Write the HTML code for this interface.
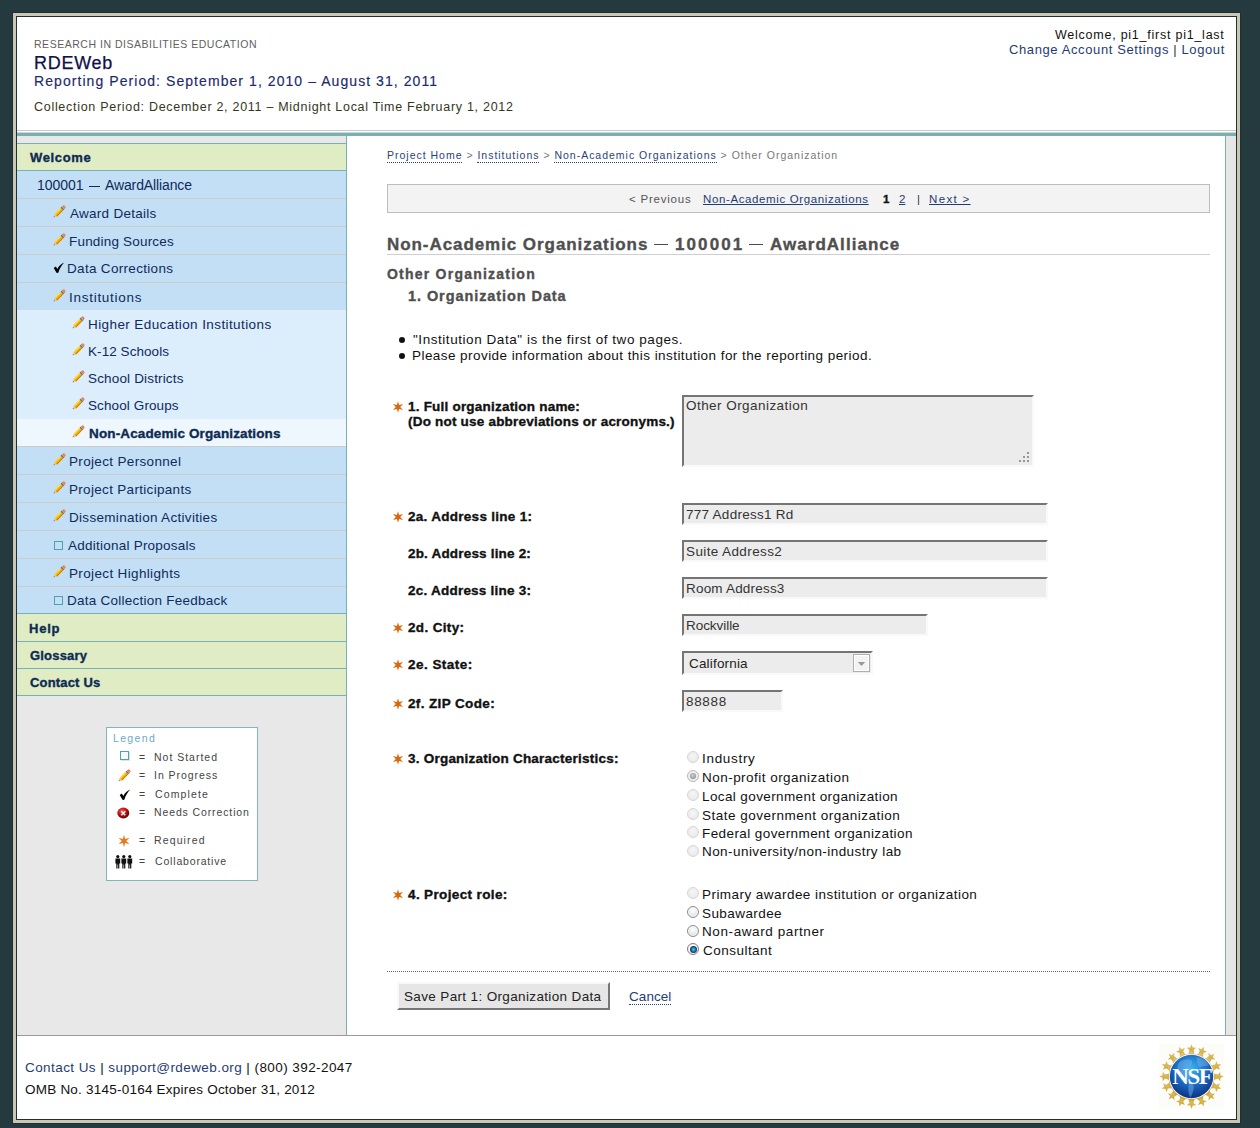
<!DOCTYPE html>
<html><head><meta charset="utf-8"><title>RDEWeb</title><style>
html,body{margin:0;padding:0;width:1260px;height:1128px;overflow:hidden;background:#253a3e}
body>div,body>svg{position:absolute}
div div{position:absolute}
.t{white-space:nowrap;line-height:normal;font-family:"Liberation Sans",sans-serif}
.b{-webkit-text-stroke:0.35px}
.dl{border-bottom:1px dotted #2b3f78}
.bc .dl{padding-bottom:1px}
u{text-decoration:underline}
</style></head><body>
<div style="left:12px;top:12px;width:1229px;height:1112px;background:#1e3036"></div>
<div style="left:13px;top:13px;width:1227px;height:1110px;background:#c9c6b1"></div>
<div style="left:16px;top:16px;width:1221px;height:1104px;background:#1e3036"></div>
<div style="left:17px;top:17px;width:1219px;height:1102px;background:#fff"></div>
<div style="left:17px;top:130px;width:1219px;height:1px;background:#c9c9c9"></div>
<div style="left:17px;top:132px;width:1219px;height:1px;background:#d9d0cf"></div>
<div style="left:17px;top:133px;width:1219px;height:3px;background:#76b2b4"></div>
<div style="left:17px;top:136px;width:329px;height:899px;background:#e8e8e8"></div>
<div style="left:346px;top:136px;width:1px;height:899px;background:#76b2b4"></div>
<div style="left:17px;top:143px;width:329px;height:1px;background:#76b2b4"></div>
<div style="left:17px;top:144px;width:329px;height:26px;background:#dfecc4"></div>
<div style="left:17px;top:170px;width:329px;height:1px;background:#76b2b4"></div>
<div style="left:17px;top:171px;width:329px;height:139px;background:#c3dff5"></div>
<div style="left:17px;top:198px;width:329px;height:1px;background:#cfcbc6"></div>
<div style="left:17px;top:226px;width:329px;height:1px;background:#cfcbc6"></div>
<div style="left:17px;top:254px;width:329px;height:1px;background:#cfcbc6"></div>
<div style="left:17px;top:282px;width:329px;height:1px;background:#cfcbc6"></div>
<div style="left:17px;top:310px;width:329px;height:109px;background:#dcedfc"></div>
<div style="left:17px;top:419px;width:329px;height:27px;background:#edf7fd"></div>
<div style="left:17px;top:446px;width:329px;height:1px;background:#cfcbc6"></div>
<div style="left:17px;top:447px;width:329px;height:166px;background:#c3dff5"></div>
<div style="left:17px;top:474px;width:329px;height:1px;background:#cfcbc6"></div>
<div style="left:17px;top:502px;width:329px;height:1px;background:#cfcbc6"></div>
<div style="left:17px;top:530px;width:329px;height:1px;background:#cfcbc6"></div>
<div style="left:17px;top:558px;width:329px;height:1px;background:#cfcbc6"></div>
<div style="left:17px;top:586px;width:329px;height:1px;background:#cfcbc6"></div>
<div style="left:17px;top:613px;width:329px;height:1px;background:#76b2b4"></div>
<div style="left:17px;top:614px;width:329px;height:27px;background:#dfecc4"></div>
<div style="left:17px;top:641px;width:329px;height:1px;background:#76b2b4"></div>
<div style="left:17px;top:642px;width:329px;height:26px;background:#dfecc4"></div>
<div style="left:17px;top:668px;width:329px;height:1px;background:#76b2b4"></div>
<div style="left:17px;top:669px;width:329px;height:26px;background:#dfecc4"></div>
<div style="left:17px;top:695px;width:329px;height:1px;background:#76b2b4"></div>
<div style="left:1225px;top:136px;width:1px;height:899px;background:#76b2b4"></div>
<div style="left:1226px;top:136px;width:10px;height:899px;background:#e6e6e6"></div>
<div style="left:17px;top:1035px;width:1219px;height:1px;background:#9a9a9a"></div>
<svg style="left:52px;top:204px" width="15" height="15" viewBox="0 0 15 15"><g transform="translate(1.7,13.3) rotate(-45)">
<path d="M0,0 L3,-1.8 L3,1.8 Z" fill="#e8c0a0"/><path d="M0,0 L1.2,-0.75 L1.2,0.75 Z" fill="#6f655d"/>
<rect x="3" y="-1.8" width="8.6" height="3.6" fill="#f6b300"/><rect x="3" y="-1.8" width="8.6" height="1.1" fill="#ffdc55"/><rect x="3" y="0.8" width="8.6" height="1.0" fill="#cf7a00"/>
<rect x="11.6" y="-1.8" width="1.4" height="3.6" fill="#3b7b92"/><path d="M13,-1.8 h1.2 a1.8,1.8 0 0 1 0,3.6 h-1.2 Z" fill="#ee8252"/></g></svg>
<svg style="left:52px;top:232px" width="15" height="15" viewBox="0 0 15 15"><g transform="translate(1.7,13.3) rotate(-45)">
<path d="M0,0 L3,-1.8 L3,1.8 Z" fill="#e8c0a0"/><path d="M0,0 L1.2,-0.75 L1.2,0.75 Z" fill="#6f655d"/>
<rect x="3" y="-1.8" width="8.6" height="3.6" fill="#f6b300"/><rect x="3" y="-1.8" width="8.6" height="1.1" fill="#ffdc55"/><rect x="3" y="0.8" width="8.6" height="1.0" fill="#cf7a00"/>
<rect x="11.6" y="-1.8" width="1.4" height="3.6" fill="#3b7b92"/><path d="M13,-1.8 h1.2 a1.8,1.8 0 0 1 0,3.6 h-1.2 Z" fill="#ee8252"/></g></svg>
<svg style="left:52px;top:288px" width="15" height="15" viewBox="0 0 15 15"><g transform="translate(1.7,13.3) rotate(-45)">
<path d="M0,0 L3,-1.8 L3,1.8 Z" fill="#e8c0a0"/><path d="M0,0 L1.2,-0.75 L1.2,0.75 Z" fill="#6f655d"/>
<rect x="3" y="-1.8" width="8.6" height="3.6" fill="#f6b300"/><rect x="3" y="-1.8" width="8.6" height="1.1" fill="#ffdc55"/><rect x="3" y="0.8" width="8.6" height="1.0" fill="#cf7a00"/>
<rect x="11.6" y="-1.8" width="1.4" height="3.6" fill="#3b7b92"/><path d="M13,-1.8 h1.2 a1.8,1.8 0 0 1 0,3.6 h-1.2 Z" fill="#ee8252"/></g></svg>
<svg style="left:71px;top:315px" width="15" height="15" viewBox="0 0 15 15"><g transform="translate(1.7,13.3) rotate(-45)">
<path d="M0,0 L3,-1.8 L3,1.8 Z" fill="#e8c0a0"/><path d="M0,0 L1.2,-0.75 L1.2,0.75 Z" fill="#6f655d"/>
<rect x="3" y="-1.8" width="8.6" height="3.6" fill="#f6b300"/><rect x="3" y="-1.8" width="8.6" height="1.1" fill="#ffdc55"/><rect x="3" y="0.8" width="8.6" height="1.0" fill="#cf7a00"/>
<rect x="11.6" y="-1.8" width="1.4" height="3.6" fill="#3b7b92"/><path d="M13,-1.8 h1.2 a1.8,1.8 0 0 1 0,3.6 h-1.2 Z" fill="#ee8252"/></g></svg>
<svg style="left:71px;top:342px" width="15" height="15" viewBox="0 0 15 15"><g transform="translate(1.7,13.3) rotate(-45)">
<path d="M0,0 L3,-1.8 L3,1.8 Z" fill="#e8c0a0"/><path d="M0,0 L1.2,-0.75 L1.2,0.75 Z" fill="#6f655d"/>
<rect x="3" y="-1.8" width="8.6" height="3.6" fill="#f6b300"/><rect x="3" y="-1.8" width="8.6" height="1.1" fill="#ffdc55"/><rect x="3" y="0.8" width="8.6" height="1.0" fill="#cf7a00"/>
<rect x="11.6" y="-1.8" width="1.4" height="3.6" fill="#3b7b92"/><path d="M13,-1.8 h1.2 a1.8,1.8 0 0 1 0,3.6 h-1.2 Z" fill="#ee8252"/></g></svg>
<svg style="left:71px;top:369px" width="15" height="15" viewBox="0 0 15 15"><g transform="translate(1.7,13.3) rotate(-45)">
<path d="M0,0 L3,-1.8 L3,1.8 Z" fill="#e8c0a0"/><path d="M0,0 L1.2,-0.75 L1.2,0.75 Z" fill="#6f655d"/>
<rect x="3" y="-1.8" width="8.6" height="3.6" fill="#f6b300"/><rect x="3" y="-1.8" width="8.6" height="1.1" fill="#ffdc55"/><rect x="3" y="0.8" width="8.6" height="1.0" fill="#cf7a00"/>
<rect x="11.6" y="-1.8" width="1.4" height="3.6" fill="#3b7b92"/><path d="M13,-1.8 h1.2 a1.8,1.8 0 0 1 0,3.6 h-1.2 Z" fill="#ee8252"/></g></svg>
<svg style="left:71px;top:396px" width="15" height="15" viewBox="0 0 15 15"><g transform="translate(1.7,13.3) rotate(-45)">
<path d="M0,0 L3,-1.8 L3,1.8 Z" fill="#e8c0a0"/><path d="M0,0 L1.2,-0.75 L1.2,0.75 Z" fill="#6f655d"/>
<rect x="3" y="-1.8" width="8.6" height="3.6" fill="#f6b300"/><rect x="3" y="-1.8" width="8.6" height="1.1" fill="#ffdc55"/><rect x="3" y="0.8" width="8.6" height="1.0" fill="#cf7a00"/>
<rect x="11.6" y="-1.8" width="1.4" height="3.6" fill="#3b7b92"/><path d="M13,-1.8 h1.2 a1.8,1.8 0 0 1 0,3.6 h-1.2 Z" fill="#ee8252"/></g></svg>
<svg style="left:71px;top:424px" width="15" height="15" viewBox="0 0 15 15"><g transform="translate(1.7,13.3) rotate(-45)">
<path d="M0,0 L3,-1.8 L3,1.8 Z" fill="#e8c0a0"/><path d="M0,0 L1.2,-0.75 L1.2,0.75 Z" fill="#6f655d"/>
<rect x="3" y="-1.8" width="8.6" height="3.6" fill="#f6b300"/><rect x="3" y="-1.8" width="8.6" height="1.1" fill="#ffdc55"/><rect x="3" y="0.8" width="8.6" height="1.0" fill="#cf7a00"/>
<rect x="11.6" y="-1.8" width="1.4" height="3.6" fill="#3b7b92"/><path d="M13,-1.8 h1.2 a1.8,1.8 0 0 1 0,3.6 h-1.2 Z" fill="#ee8252"/></g></svg>
<svg style="left:52px;top:452px" width="15" height="15" viewBox="0 0 15 15"><g transform="translate(1.7,13.3) rotate(-45)">
<path d="M0,0 L3,-1.8 L3,1.8 Z" fill="#e8c0a0"/><path d="M0,0 L1.2,-0.75 L1.2,0.75 Z" fill="#6f655d"/>
<rect x="3" y="-1.8" width="8.6" height="3.6" fill="#f6b300"/><rect x="3" y="-1.8" width="8.6" height="1.1" fill="#ffdc55"/><rect x="3" y="0.8" width="8.6" height="1.0" fill="#cf7a00"/>
<rect x="11.6" y="-1.8" width="1.4" height="3.6" fill="#3b7b92"/><path d="M13,-1.8 h1.2 a1.8,1.8 0 0 1 0,3.6 h-1.2 Z" fill="#ee8252"/></g></svg>
<svg style="left:52px;top:480px" width="15" height="15" viewBox="0 0 15 15"><g transform="translate(1.7,13.3) rotate(-45)">
<path d="M0,0 L3,-1.8 L3,1.8 Z" fill="#e8c0a0"/><path d="M0,0 L1.2,-0.75 L1.2,0.75 Z" fill="#6f655d"/>
<rect x="3" y="-1.8" width="8.6" height="3.6" fill="#f6b300"/><rect x="3" y="-1.8" width="8.6" height="1.1" fill="#ffdc55"/><rect x="3" y="0.8" width="8.6" height="1.0" fill="#cf7a00"/>
<rect x="11.6" y="-1.8" width="1.4" height="3.6" fill="#3b7b92"/><path d="M13,-1.8 h1.2 a1.8,1.8 0 0 1 0,3.6 h-1.2 Z" fill="#ee8252"/></g></svg>
<svg style="left:52px;top:508px" width="15" height="15" viewBox="0 0 15 15"><g transform="translate(1.7,13.3) rotate(-45)">
<path d="M0,0 L3,-1.8 L3,1.8 Z" fill="#e8c0a0"/><path d="M0,0 L1.2,-0.75 L1.2,0.75 Z" fill="#6f655d"/>
<rect x="3" y="-1.8" width="8.6" height="3.6" fill="#f6b300"/><rect x="3" y="-1.8" width="8.6" height="1.1" fill="#ffdc55"/><rect x="3" y="0.8" width="8.6" height="1.0" fill="#cf7a00"/>
<rect x="11.6" y="-1.8" width="1.4" height="3.6" fill="#3b7b92"/><path d="M13,-1.8 h1.2 a1.8,1.8 0 0 1 0,3.6 h-1.2 Z" fill="#ee8252"/></g></svg>
<svg style="left:52px;top:564px" width="15" height="15" viewBox="0 0 15 15"><g transform="translate(1.7,13.3) rotate(-45)">
<path d="M0,0 L3,-1.8 L3,1.8 Z" fill="#e8c0a0"/><path d="M0,0 L1.2,-0.75 L1.2,0.75 Z" fill="#6f655d"/>
<rect x="3" y="-1.8" width="8.6" height="3.6" fill="#f6b300"/><rect x="3" y="-1.8" width="8.6" height="1.1" fill="#ffdc55"/><rect x="3" y="0.8" width="8.6" height="1.0" fill="#cf7a00"/>
<rect x="11.6" y="-1.8" width="1.4" height="3.6" fill="#3b7b92"/><path d="M13,-1.8 h1.2 a1.8,1.8 0 0 1 0,3.6 h-1.2 Z" fill="#ee8252"/></g></svg>
<svg style="left:53px;top:262px" width="12" height="12" viewBox="0 0 12 12"><path d="M0.7,6.0 L2.9,4.5 L4.3,6.9 C5.7,4.3 7.9,1.7 11.3,0.5 C8.7,3.1 6.7,6.2 5.3,10.7 L3.7,10.9 Z" fill="#000"/></svg>
<div style="left:54px;top:541px;width:7px;height:7px;border:1px solid #52a0ac;background:transparent;box-shadow:none"></div>
<div style="left:54px;top:596px;width:7px;height:7px;border:1px solid #52a0ac;background:transparent;box-shadow:none"></div>
<div style="left:106px;top:727px;width:150px;height:152px;background:#fff;border:1px solid #7fb7bb"></div>
<div style="left:120px;top:751px;width:7px;height:7px;border:1px solid #52a0ac;background:#f4fafa;box-shadow:1px 1px 0 #dde4e4"></div>
<svg style="left:117px;top:768px" width="15" height="15" viewBox="0 0 15 15"><g transform="translate(1.7,13.3) rotate(-45)">
<path d="M0,0 L3,-1.8 L3,1.8 Z" fill="#e8c0a0"/><path d="M0,0 L1.2,-0.75 L1.2,0.75 Z" fill="#6f655d"/>
<rect x="3" y="-1.8" width="8.6" height="3.6" fill="#f6b300"/><rect x="3" y="-1.8" width="8.6" height="1.1" fill="#ffdc55"/><rect x="3" y="0.8" width="8.6" height="1.0" fill="#cf7a00"/>
<rect x="11.6" y="-1.8" width="1.4" height="3.6" fill="#3b7b92"/><path d="M13,-1.8 h1.2 a1.8,1.8 0 0 1 0,3.6 h-1.2 Z" fill="#ee8252"/></g></svg>
<svg style="left:119px;top:789px" width="12" height="12" viewBox="0 0 12 12"><path d="M0.7,6.0 L2.9,4.5 L4.3,6.9 C5.7,4.3 7.9,1.7 11.3,0.5 C8.7,3.1 6.7,6.2 5.3,10.7 L3.7,10.9 Z" fill="#000"/></svg>
<svg style="left:117px;top:807px" width="13" height="13" viewBox="0 0 13 13"><defs><radialGradient id="rg" cx="0.4" cy="0.35" r="0.7"><stop offset="0" stop-color="#f06060"/><stop offset="0.55" stop-color="#b80c0c"/><stop offset="1" stop-color="#5a0000"/></radialGradient></defs><ellipse cx="6.3" cy="6.0" rx="6" ry="5.4" fill="url(#rg)"/><path d="M4.3,4.2 L8.3,8.2 M8.3,4.2 L4.3,8.2" stroke="#fff" stroke-width="1.4"/></svg>
<svg style="left:117.5px;top:834.5px" width="12" height="12" viewBox="0 0 12 12"><polygon points="6.00,-0.30 4.87,4.04 0.54,2.85 3.73,6.00 0.54,9.15 4.87,7.96 6.00,12.30 7.13,7.96 11.46,9.15 8.27,6.00 11.46,2.85 7.13,4.04" fill="#e67a20"/></svg>
<svg style="left:115px;top:855px" width="18" height="14" viewBox="0 0 18 14"><g transform="translate(2.8,0)"><circle cx="0" cy="1.6" r="1.6" fill="#111"/><path d="M-2.4,3.6 h4.8 v5 h-0.9 v5 h-1.2 v-4 h-0.6 v4 h-1.2 v-5 h-0.9 Z" fill="#111"/></g><g transform="translate(8.8,0)"><circle cx="0" cy="1.6" r="1.6" fill="#111"/><path d="M-2.4,3.6 h4.8 v5 h-0.9 v5 h-1.2 v-4 h-0.6 v4 h-1.2 v-5 h-0.9 Z" fill="#111"/></g><g transform="translate(14.8,0)"><circle cx="0" cy="1.6" r="1.6" fill="#111"/><path d="M-2.4,3.6 h4.8 v5 h-0.9 v5 h-1.2 v-4 h-0.6 v4 h-1.2 v-5 h-0.9 Z" fill="#111"/></g></svg>
<div style="left:89px;top:186px;width:11px;height:1px;background:#0f2a5c"></div>
<div style="left:654px;top:244px;width:14px;height:1px;background:#4a4a4a"></div>
<div style="left:749px;top:244px;width:14px;height:1px;background:#4a4a4a"></div>
<div style="left:387px;top:184px;width:821px;height:27px;background:#f3f3f3;border:1px solid #bdbdbd"></div>
<div style="left:387px;top:254px;width:823px;height:1px;background:#cfcfcf"></div>
<div style="left:399px;top:337px;width:6px;height:6px;border-radius:50%;background:#111"></div>
<div style="left:399px;top:353px;width:6px;height:6px;border-radius:50%;background:#111"></div>
<svg style="left:391.5px;top:400.5px" width="12" height="12" viewBox="0 0 12 12"><polygon points="6.00,0.20 4.90,4.09 0.98,3.10 3.80,6.00 0.98,8.90 4.90,7.91 6.00,11.80 7.10,7.91 11.02,8.90 8.20,6.00 11.02,3.10 7.10,4.09" fill="#d9690f"/></svg>
<svg style="left:391.5px;top:510.5px" width="12" height="12" viewBox="0 0 12 12"><polygon points="6.00,0.20 4.90,4.09 0.98,3.10 3.80,6.00 0.98,8.90 4.90,7.91 6.00,11.80 7.10,7.91 11.02,8.90 8.20,6.00 11.02,3.10 7.10,4.09" fill="#d9690f"/></svg>
<svg style="left:391.5px;top:621.5px" width="12" height="12" viewBox="0 0 12 12"><polygon points="6.00,0.20 4.90,4.09 0.98,3.10 3.80,6.00 0.98,8.90 4.90,7.91 6.00,11.80 7.10,7.91 11.02,8.90 8.20,6.00 11.02,3.10 7.10,4.09" fill="#d9690f"/></svg>
<svg style="left:391.5px;top:658.5px" width="12" height="12" viewBox="0 0 12 12"><polygon points="6.00,0.20 4.90,4.09 0.98,3.10 3.80,6.00 0.98,8.90 4.90,7.91 6.00,11.80 7.10,7.91 11.02,8.90 8.20,6.00 11.02,3.10 7.10,4.09" fill="#d9690f"/></svg>
<svg style="left:391.5px;top:697.5px" width="12" height="12" viewBox="0 0 12 12"><polygon points="6.00,0.20 4.90,4.09 0.98,3.10 3.80,6.00 0.98,8.90 4.90,7.91 6.00,11.80 7.10,7.91 11.02,8.90 8.20,6.00 11.02,3.10 7.10,4.09" fill="#d9690f"/></svg>
<svg style="left:391.5px;top:752.5px" width="12" height="12" viewBox="0 0 12 12"><polygon points="6.00,0.20 4.90,4.09 0.98,3.10 3.80,6.00 0.98,8.90 4.90,7.91 6.00,11.80 7.10,7.91 11.02,8.90 8.20,6.00 11.02,3.10 7.10,4.09" fill="#d9690f"/></svg>
<svg style="left:391.5px;top:888.5px" width="12" height="12" viewBox="0 0 12 12"><polygon points="6.00,0.20 4.90,4.09 0.98,3.10 3.80,6.00 0.98,8.90 4.90,7.91 6.00,11.80 7.10,7.91 11.02,8.90 8.20,6.00 11.02,3.10 7.10,4.09" fill="#d9690f"/></svg>
<div style="left:682px;top:395px;width:348px;height:68px;background:#ececec;border-top:2px solid #757575;border-left:2px solid #757575;border-right:2px solid #f9f9f9;border-bottom:2px solid #f9f9f9"></div>
<svg style="left:1017px;top:450px" width="12" height="12" viewBox="0 0 12 12" fill="#979797"><rect x="10" y="2" width="2" height="2"/><rect x="6" y="6" width="2" height="2"/><rect x="10" y="6" width="2" height="2"/><rect x="2" y="10" width="2" height="2"/><rect x="6" y="10" width="2" height="2"/><rect x="10" y="10" width="2" height="2"/></svg>
<div style="left:682px;top:503px;width:362px;height:18px;background:#ececec;border-top:2px solid #757575;border-left:2px solid #757575;border-right:2px solid #f9f9f9;border-bottom:2px solid #f9f9f9"></div>
<div style="left:682px;top:540px;width:362px;height:18px;background:#ececec;border-top:2px solid #757575;border-left:2px solid #757575;border-right:2px solid #f9f9f9;border-bottom:2px solid #f9f9f9"></div>
<div style="left:682px;top:577px;width:362px;height:18px;background:#ececec;border-top:2px solid #757575;border-left:2px solid #757575;border-right:2px solid #f9f9f9;border-bottom:2px solid #f9f9f9"></div>
<div style="left:682px;top:614px;width:242px;height:18px;background:#ececec;border-top:2px solid #757575;border-left:2px solid #757575;border-right:2px solid #f9f9f9;border-bottom:2px solid #f9f9f9"></div>
<div style="left:682px;top:651px;width:187px;height:20px;background:#ececec;border-top:2px solid #757575;border-left:2px solid #757575;border-right:2px solid #f9f9f9;border-bottom:2px solid #f9f9f9"></div>
<div style="left:853px;top:654px;width:15px;height:16px;background:#f3f3f3;border:1px solid #a9afb3;box-shadow:inset 0 0 0 1px #fff"></div>
<svg style="left:857px;top:661px" width="9" height="6" viewBox="0 0 9 6"><path d="M0.8,1 L8.2,1 L4.5,5 Z" fill="#999"/></svg>
<div style="left:682px;top:690px;width:97px;height:18px;background:#ececec;border-top:2px solid #757575;border-left:2px solid #757575;border-right:2px solid #f9f9f9;border-bottom:2px solid #f9f9f9"></div>
<div style="left:687px;top:751px;width:10px;height:10px;border-radius:50%;background:radial-gradient(circle at 50% 40%,#f6f6f6,#e6e6e6);border:1px solid #d6d6d6"></div>
<div style="left:687px;top:770px;width:10px;height:10px;border-radius:50%;background:radial-gradient(circle at 50% 40%,#f4f4f4,#dedede);border:1px solid #b8b8b8;box-shadow:inset 0 0 0 1px #f4f4f4"><div style="left:2px;top:2px;width:6px;height:6px;border-radius:50%;background:radial-gradient(circle at 45% 40%,#d0d0d0,#808080)"></div></div>
<div style="left:687px;top:789px;width:10px;height:10px;border-radius:50%;background:radial-gradient(circle at 50% 40%,#f6f6f6,#e6e6e6);border:1px solid #d6d6d6"></div>
<div style="left:687px;top:808px;width:10px;height:10px;border-radius:50%;background:radial-gradient(circle at 50% 40%,#f6f6f6,#e6e6e6);border:1px solid #d6d6d6"></div>
<div style="left:687px;top:826px;width:10px;height:10px;border-radius:50%;background:radial-gradient(circle at 50% 40%,#f6f6f6,#e6e6e6);border:1px solid #d6d6d6"></div>
<div style="left:687px;top:845px;width:10px;height:10px;border-radius:50%;background:radial-gradient(circle at 50% 40%,#f6f6f6,#e6e6e6);border:1px solid #d6d6d6"></div>
<div style="left:687px;top:887px;width:10px;height:10px;border-radius:50%;background:radial-gradient(circle at 50% 40%,#f6f6f6,#e6e6e6);border:1px solid #d6d6d6"></div>
<div style="left:687px;top:906px;width:10px;height:10px;border-radius:50%;background:radial-gradient(circle at 50% 35%,#ffffff,#d2d6da);border:1px solid #8c8c8c;box-shadow:inset 0 0 0 1px #fafafa"></div>
<div style="left:687px;top:925px;width:10px;height:10px;border-radius:50%;background:radial-gradient(circle at 50% 35%,#ffffff,#d2d6da);border:1px solid #8c8c8c;box-shadow:inset 0 0 0 1px #fafafa"></div>
<div style="left:687px;top:943px;width:10px;height:10px;border-radius:50%;background:#fff;border:1px solid #7c7c7c;box-shadow:inset 0 0 0 1px #f0f0f0"><div style="left:1.5px;top:1.5px;width:7px;height:7px;border-radius:50%;background:radial-gradient(circle at 50% 50%,#62c4f0 0,#2a8fc8 28%,#0c3f70 62%,#06264a)"></div></div>
<div style="left:387px;top:971px;width:823px;height:0px;border-top:1px dotted #666"></div>
<div style="left:397px;top:982px;width:209px;height:24px;background:#e6e6e6;border-top:2px solid #f8f8f8;border-left:2px solid #f8f8f8;border-right:2px solid #777;border-bottom:2px solid #777"></div>
<svg style="left:1159px;top:1044px" width="65" height="65" viewBox="0 0 64 64"><rect width="64" height="64" fill="#fcfcf9"/>
<defs><radialGradient id="gl" cx="0.5" cy="0.32" r="0.72"><stop offset="0" stop-color="#3ab4f0"/><stop offset="0.5" stop-color="#1c6cc6"/><stop offset="1" stop-color="#0a2b7c"/></radialGradient>
<linearGradient id="gd" x1="0" y1="0" x2="0" y2="1"><stop offset="0" stop-color="#dcc070"/><stop offset="1" stop-color="#cfa830"/></linearGradient></defs>
<g fill="url(#gd)"><polygon points="32.00,0.30 33.23,3.50 36.66,3.69 34.00,5.85 34.88,9.16 32.00,7.30 29.12,9.16 30.00,5.85 27.34,3.69 30.77,3.50"/><polygon points="44.13,2.71 44.05,6.14 47.14,7.62 43.85,8.60 43.40,12.00 41.45,9.18 38.08,9.80 40.16,7.08 38.53,4.06 41.77,5.20"/><polygon points="54.42,9.58 53.02,12.72 55.32,15.27 51.90,14.92 50.18,17.89 49.47,14.53 46.11,13.82 49.08,12.10 48.73,8.68 51.28,10.98"/><polygon points="61.29,19.87 58.80,22.23 59.94,25.47 56.92,23.84 54.20,25.92 54.82,22.55 52.00,20.60 55.40,20.15 56.38,16.86 57.86,19.95"/><polygon points="63.70,32.00 60.50,33.23 60.31,36.66 58.15,34.00 54.84,34.88 56.70,32.00 54.84,29.12 58.15,30.00 60.31,27.34 60.50,30.77"/><polygon points="61.29,44.13 57.86,44.05 56.38,47.14 55.40,43.85 52.00,43.40 54.82,41.45 54.20,38.08 56.92,40.16 59.94,38.53 58.80,41.77"/><polygon points="54.42,54.42 51.28,53.02 48.73,55.32 49.08,51.90 46.11,50.18 49.47,49.47 50.18,46.11 51.90,49.08 55.32,48.73 53.02,51.28"/><polygon points="44.13,61.29 41.77,58.80 38.53,59.94 40.16,56.92 38.08,54.20 41.45,54.82 43.40,52.00 43.85,55.40 47.14,56.38 44.05,57.86"/><polygon points="32.00,63.70 30.77,60.50 27.34,60.31 30.00,58.15 29.12,54.84 32.00,56.70 34.88,54.84 34.00,58.15 36.66,60.31 33.23,60.50"/><polygon points="19.87,61.29 19.95,57.86 16.86,56.38 20.15,55.40 20.60,52.00 22.55,54.82 25.92,54.20 23.84,56.92 25.47,59.94 22.23,58.80"/><polygon points="9.58,54.42 10.98,51.28 8.68,48.73 12.10,49.08 13.82,46.11 14.53,49.47 17.89,50.18 14.92,51.90 15.27,55.32 12.72,53.02"/><polygon points="2.71,44.13 5.20,41.77 4.06,38.53 7.08,40.16 9.80,38.08 9.18,41.45 12.00,43.40 8.60,43.85 7.62,47.14 6.14,44.05"/><polygon points="0.30,32.00 3.50,30.77 3.69,27.34 5.85,30.00 9.16,29.12 7.30,32.00 9.16,34.88 5.85,34.00 3.69,36.66 3.50,33.23"/><polygon points="2.71,19.87 6.14,19.95 7.62,16.86 8.60,20.15 12.00,20.60 9.18,22.55 9.80,25.92 7.08,23.84 4.06,25.47 5.20,22.23"/><polygon points="9.58,9.58 12.72,10.98 15.27,8.68 14.92,12.10 17.89,13.82 14.53,14.53 13.82,17.89 12.10,14.92 8.68,15.27 10.98,12.72"/><polygon points="19.87,2.71 22.23,5.20 25.47,4.06 23.84,7.08 25.92,9.80 22.55,9.18 20.60,12.00 20.15,8.60 16.86,7.62 19.95,6.14"/><circle cx="32" cy="32" r="24.6"/></g>
<g transform="translate(0,0.2)" fill="#fff"><ellipse transform="rotate(11.25 32 32)" cx="32" cy="7.6" rx="2.3" ry="1.9"/><ellipse transform="rotate(33.75 32 32)" cx="32" cy="7.6" rx="2.3" ry="1.9"/><ellipse transform="rotate(56.25 32 32)" cx="32" cy="7.6" rx="2.3" ry="1.9"/><ellipse transform="rotate(78.75 32 32)" cx="32" cy="7.6" rx="2.3" ry="1.9"/><ellipse transform="rotate(101.25 32 32)" cx="32" cy="7.6" rx="2.3" ry="1.9"/><ellipse transform="rotate(123.75 32 32)" cx="32" cy="7.6" rx="2.3" ry="1.9"/><ellipse transform="rotate(146.25 32 32)" cx="32" cy="7.6" rx="2.3" ry="1.9"/><ellipse transform="rotate(168.75 32 32)" cx="32" cy="7.6" rx="2.3" ry="1.9"/><ellipse transform="rotate(191.25 32 32)" cx="32" cy="7.6" rx="2.3" ry="1.9"/><ellipse transform="rotate(213.75 32 32)" cx="32" cy="7.6" rx="2.3" ry="1.9"/><ellipse transform="rotate(236.25 32 32)" cx="32" cy="7.6" rx="2.3" ry="1.9"/><ellipse transform="rotate(258.75 32 32)" cx="32" cy="7.6" rx="2.3" ry="1.9"/><ellipse transform="rotate(281.25 32 32)" cx="32" cy="7.6" rx="2.3" ry="1.9"/><ellipse transform="rotate(303.75 32 32)" cx="32" cy="7.6" rx="2.3" ry="1.9"/><ellipse transform="rotate(326.25 32 32)" cx="32" cy="7.6" rx="2.3" ry="1.9"/><ellipse transform="rotate(348.75 32 32)" cx="32" cy="7.6" rx="2.3" ry="1.9"/></g>
<circle cx="32" cy="32" r="22.2" fill="#fff"/>
<circle cx="32" cy="32" r="21.4" fill="url(#gl)"/>
<path d="M20,18 c4,-3 9,-4 12,-2 c2,3 -2,6 -1,10 c1,5 -1,9 -4,14 c-2,-5 -3,-8 -6,-10 c-3,-3 -4,-8 -1,-12 Z M37,13 c5,0 10,3 12,8 c-3,1 -6,0 -9,2 c-2,-2 -3,-6 -3,-10 Z M30,36 c3,2 5,5 4,9 c-1,3 -2,6 -3,8 c-2,-4 -3,-9 -1,-17 Z" fill="#7ab8e8" opacity="0.45"/>
<text x="32.3" y="39.6" text-anchor="middle" font-family="Liberation Serif" font-weight="bold" font-size="22.5" fill="#fff" letter-spacing="-1.3">NSF</text></svg>
<div class="t" style="left:34px;top:38px;font-size:10.5px;font-weight:normal;letter-spacing:0.524px;color:#5f5f5f;">RESEARCH IN DISABILITIES EDUCATION</div>
<div class="t" style="left:34px;top:53px;font-size:18px;font-weight:normal;letter-spacing:0.72px;color:#10104c;-webkit-text-stroke:0.25px">RDEWeb</div>
<div class="t" style="left:34px;top:73px;font-size:14px;font-weight:normal;letter-spacing:1.065px;color:#1c2a6c;-webkit-text-stroke:0.15px">Reporting Period: September 1, 2010 &ndash; August 31, 2011</div>
<div class="t" style="left:34px;top:100px;font-size:12.5px;font-weight:normal;letter-spacing:0.71px;color:#36361a;">Collection Period: December 2, 2011 &ndash; Midnight Local Time February 1, 2012</div>
<div class="t" style="left:1055px;top:28px;font-size:12.5px;font-weight:normal;letter-spacing:0.757px;color:#111;">Welcome, pi1_first pi1_last</div>
<div class="t" style="left:1009px;top:42px;font-size:13px;font-weight:normal;letter-spacing:0.61px;color:#1f3c74;">Change Account Settings <span style="color:#333">|</span> Logout</div>
<div class="t b" style="left:30px;top:150px;font-size:13px;font-weight:bold;letter-spacing:0.633px;color:#0d2a52;">Welcome</div>
<div class="t" style="left:37px;top:177px;font-size:14px;font-weight:normal;letter-spacing:-0.04px;color:#0f2a5c;">100001</div>
<div class="t" style="left:105px;top:177px;font-size:14px;font-weight:normal;letter-spacing:-0.125px;color:#0f2a5c;">AwardAlliance</div>
<div class="t" style="left:70px;top:206px;font-size:13.5px;font-weight:normal;letter-spacing:0.274px;color:#0f2a5c;">Award Details</div>
<div class="t" style="left:69px;top:234px;font-size:13.5px;font-weight:normal;letter-spacing:0.193px;color:#0f2a5c;">Funding Sources</div>
<div class="t" style="left:67px;top:261px;font-size:13.5px;font-weight:normal;letter-spacing:0.313px;color:#0f2a5c;">Data Corrections</div>
<div class="t" style="left:69px;top:290px;font-size:13.5px;font-weight:normal;letter-spacing:0.727px;color:#0f2a5c;">Institutions</div>
<div class="t" style="left:88px;top:317px;font-size:13.5px;font-weight:normal;letter-spacing:0.404px;color:#0f2a5c;">Higher Education Institutions</div>
<div class="t" style="left:88px;top:344px;font-size:13.5px;font-weight:normal;letter-spacing:0.064px;color:#0f2a5c;">K-12 Schools</div>
<div class="t" style="left:88px;top:371px;font-size:13.5px;font-weight:normal;letter-spacing:0.16px;color:#0f2a5c;">School Districts</div>
<div class="t" style="left:88px;top:398px;font-size:13.5px;font-weight:normal;letter-spacing:0.108px;color:#0f2a5c;">School Groups</div>
<div class="t b" style="left:89px;top:426px;font-size:13.5px;font-weight:bold;letter-spacing:0.128px;color:#0d2a52;">Non-Academic Organizations</div>
<div class="t" style="left:69px;top:454px;font-size:13.5px;font-weight:normal;letter-spacing:0.336px;color:#0f2a5c;">Project Personnel</div>
<div class="t" style="left:69px;top:482px;font-size:13.5px;font-weight:normal;letter-spacing:0.311px;color:#0f2a5c;">Project Participants</div>
<div class="t" style="left:69px;top:510px;font-size:13.5px;font-weight:normal;letter-spacing:0.308px;color:#0f2a5c;">Dissemination Activities</div>
<div class="t" style="left:68px;top:538px;font-size:13.5px;font-weight:normal;letter-spacing:0.237px;color:#0f2a5c;">Additional Proposals</div>
<div class="t" style="left:69px;top:566px;font-size:13.5px;font-weight:normal;letter-spacing:0.353px;color:#0f2a5c;">Project Highlights</div>
<div class="t" style="left:67px;top:593px;font-size:13.5px;font-weight:normal;letter-spacing:0.249px;color:#0f2a5c;">Data Collection Feedback</div>
<div class="t b" style="left:29px;top:621px;font-size:13px;font-weight:bold;letter-spacing:0.766px;color:#0d2a52;">Help</div>
<div class="t b" style="left:30px;top:648px;font-size:13px;font-weight:bold;letter-spacing:0.185px;color:#0d2a52;">Glossary</div>
<div class="t b" style="left:30px;top:675px;font-size:13px;font-weight:bold;letter-spacing:0.177px;color:#0d2a52;">Contact Us</div>
<div class="t" style="left:113px;top:732px;font-size:10.5px;font-weight:normal;letter-spacing:1.34px;color:#6fa9c9;">Legend</div>
<div class="t" style="left:139px;top:751px;font-size:10.5px;font-weight:normal;letter-spacing:0.0px;color:#444;">=</div>
<div class="t" style="left:154px;top:751px;font-size:10.5px;font-weight:normal;letter-spacing:0.99px;color:#444;">Not Started</div>
<div class="t" style="left:139px;top:769px;font-size:10.5px;font-weight:normal;letter-spacing:0.0px;color:#444;">=</div>
<div class="t" style="left:154px;top:769px;font-size:10.5px;font-weight:normal;letter-spacing:0.96px;color:#444;">In Progress</div>
<div class="t" style="left:139px;top:788px;font-size:10.5px;font-weight:normal;letter-spacing:0.0px;color:#444;">=</div>
<div class="t" style="left:155px;top:788px;font-size:10.5px;font-weight:normal;letter-spacing:1.129px;color:#444;">Complete</div>
<div class="t" style="left:139px;top:806px;font-size:10.5px;font-weight:normal;letter-spacing:0.0px;color:#444;">=</div>
<div class="t" style="left:154px;top:806px;font-size:10.5px;font-weight:normal;letter-spacing:0.88px;color:#444;">Needs Correction</div>
<div class="t" style="left:139px;top:834px;font-size:10.5px;font-weight:normal;letter-spacing:0.0px;color:#444;">=</div>
<div class="t" style="left:154px;top:834px;font-size:10.5px;font-weight:normal;letter-spacing:1.129px;color:#444;">Required</div>
<div class="t" style="left:139px;top:855px;font-size:10.5px;font-weight:normal;letter-spacing:0.0px;color:#444;">=</div>
<div class="t" style="left:155px;top:855px;font-size:10.5px;font-weight:normal;letter-spacing:0.825px;color:#444;">Collaborative</div>
<div class="t bc" style="left:387px;top:149px;font-size:10.5px;font-weight:normal;letter-spacing:0.989px;color:#2b3f78;"><span class="dl">Project Home</span> <span style="color:#777">&gt;</span> <span class="dl">Institutions</span> <span style="color:#777">&gt;</span> <span class="dl">Non-Academic Organizations</span> <span style="color:#777">&gt; Other Organization</span></div>
<div class="t" style="left:629px;top:193px;font-size:11.5px;font-weight:normal;letter-spacing:0.778px;color:#555;">&lt; Previous</div>
<div class="t" style="left:703px;top:193px;font-size:11.5px;font-weight:normal;letter-spacing:0.62px;color:#1f3c74;"><u>Non-Academic Organizations</u></div>
<div class="t b" style="left:883px;top:193px;font-size:11.5px;font-weight:bold;letter-spacing:0.0px;color:#111;">1</div>
<div class="t" style="left:899px;top:193px;font-size:11.5px;font-weight:normal;letter-spacing:0.0px;color:#1f3c74;"><u>2</u></div>
<div class="t" style="left:917px;top:193px;font-size:11.5px;font-weight:normal;letter-spacing:0.0px;color:#333;">|</div>
<div class="t" style="left:929px;top:193px;font-size:11.5px;font-weight:normal;letter-spacing:1.34px;color:#1f3c74;"><u>Next &gt;</u></div>
<div class="t b" style="left:387px;top:235px;font-size:17px;font-weight:bold;letter-spacing:0.932px;color:#4f4f4f;">Non-Academic Organizations</div>
<div class="t b" style="left:675px;top:235px;font-size:17px;font-weight:bold;letter-spacing:2.1px;color:#4f4f4f;">100001</div>
<div class="t b" style="left:770px;top:235px;font-size:17px;font-weight:bold;letter-spacing:1.033px;color:#4f4f4f;">AwardAlliance</div>
<div class="t b" style="left:387px;top:266px;font-size:14px;font-weight:bold;letter-spacing:1.23px;color:#4f4f4f;">Other Organization</div>
<div class="t b" style="left:408px;top:288px;font-size:14.5px;font-weight:bold;letter-spacing:0.92px;color:#4f4f4f;">1. Organization Data</div>
<div class="t" style="left:413px;top:332px;font-size:13.5px;font-weight:normal;letter-spacing:0.554px;color:#111;">"Institution Data" is the first of two pages.</div>
<div class="t" style="left:412px;top:348px;font-size:13.5px;font-weight:normal;letter-spacing:0.441px;color:#111;">Please provide information about this institution for the reporting period.</div>
<div class="t b" style="left:408px;top:399px;font-size:13.5px;font-weight:bold;letter-spacing:0.212px;color:#111;">1. Full organization name:</div>
<div class="t b" style="left:408px;top:414px;font-size:13.5px;font-weight:bold;letter-spacing:0.204px;color:#111;">(Do not use abbreviations or acronyms.)</div>
<div class="t b" style="left:408px;top:509px;font-size:13.5px;font-weight:bold;letter-spacing:0.288px;color:#111;">2a. Address line 1:</div>
<div class="t b" style="left:408px;top:546px;font-size:13.5px;font-weight:bold;letter-spacing:0.184px;color:#111;">2b. Address line 2:</div>
<div class="t b" style="left:408px;top:583px;font-size:13.5px;font-weight:bold;letter-spacing:0.233px;color:#111;">2c. Address line 3:</div>
<div class="t b" style="left:408px;top:620px;font-size:13.5px;font-weight:bold;letter-spacing:0.35px;color:#111;">2d. City:</div>
<div class="t b" style="left:408px;top:657px;font-size:13.5px;font-weight:bold;letter-spacing:0.466px;color:#111;">2e. State:</div>
<div class="t b" style="left:408px;top:696px;font-size:13.5px;font-weight:bold;letter-spacing:0.366px;color:#111;">2f. ZIP Code:</div>
<div class="t b" style="left:408px;top:751px;font-size:13.5px;font-weight:bold;letter-spacing:0.228px;color:#111;">3. Organization Characteristics:</div>
<div class="t b" style="left:408px;top:887px;font-size:13.5px;font-weight:bold;letter-spacing:0.367px;color:#111;">4. Project role:</div>
<div class="t" style="left:686px;top:398px;font-size:13.5px;font-weight:normal;letter-spacing:0.447px;color:#333;">Other Organization</div>
<div class="t" style="left:686px;top:507px;font-size:13.5px;font-weight:normal;letter-spacing:0.265px;color:#333;">777 Address1 Rd</div>
<div class="t" style="left:686px;top:544px;font-size:13.5px;font-weight:normal;letter-spacing:0.385px;color:#333;">Suite Address2</div>
<div class="t" style="left:686px;top:581px;font-size:13.5px;font-weight:normal;letter-spacing:0.191px;color:#333;">Room Address3</div>
<div class="t" style="left:686px;top:618px;font-size:13.5px;font-weight:normal;letter-spacing:-0.05px;color:#333;">Rockville</div>
<div class="t" style="left:689px;top:656px;font-size:13.5px;font-weight:normal;letter-spacing:0.177px;color:#222;">California</div>
<div class="t" style="left:686px;top:694px;font-size:13.5px;font-weight:normal;letter-spacing:0.65px;color:#333;">88888</div>
<div class="t" style="left:702px;top:751px;font-size:13.5px;font-weight:normal;letter-spacing:0.686px;color:#111;">Industry</div>
<div class="t" style="left:702px;top:770px;font-size:13.5px;font-weight:normal;letter-spacing:0.469px;color:#111;">Non-profit organization</div>
<div class="t" style="left:702px;top:789px;font-size:13.5px;font-weight:normal;letter-spacing:0.39px;color:#111;">Local government organization</div>
<div class="t" style="left:702px;top:808px;font-size:13.5px;font-weight:normal;letter-spacing:0.5px;color:#111;">State government organization</div>
<div class="t" style="left:702px;top:826px;font-size:13.5px;font-weight:normal;letter-spacing:0.41px;color:#111;">Federal government organization</div>
<div class="t" style="left:702px;top:844px;font-size:13.5px;font-weight:normal;letter-spacing:0.433px;color:#111;">Non-university/non-industry lab</div>
<div class="t" style="left:702px;top:887px;font-size:13.5px;font-weight:normal;letter-spacing:0.452px;color:#111;">Primary awardee institution or organization</div>
<div class="t" style="left:702px;top:906px;font-size:13.5px;font-weight:normal;letter-spacing:0.423px;color:#111;">Subawardee</div>
<div class="t" style="left:702px;top:924px;font-size:13.5px;font-weight:normal;letter-spacing:0.594px;color:#111;">Non-award partner</div>
<div class="t" style="left:703px;top:943px;font-size:13.5px;font-weight:normal;letter-spacing:0.478px;color:#111;">Consultant</div>
<div class="t" style="left:404px;top:989px;font-size:13.5px;font-weight:normal;letter-spacing:0.354px;color:#222;">Save Part 1: Organization Data</div>
<div class="t" style="left:629px;top:989px;font-size:13.5px;font-weight:normal;letter-spacing:0.06px;color:#1f3c74;"><span class="dl">Cancel</span></div>
<div class="t" style="left:25px;top:1060px;font-size:13.5px;font-weight:normal;letter-spacing:0.423px;color:#1f3c74;">Contact Us <span style="color:#111">| </span>support@rdeweb.org<span style="color:#111"> | (800) 392-2047</span></div>
<div class="t" style="left:25px;top:1082px;font-size:13.5px;font-weight:normal;letter-spacing:0.224px;color:#111;">OMB No. 3145-0164 Expires October 31, 2012</div>
</body></html>
